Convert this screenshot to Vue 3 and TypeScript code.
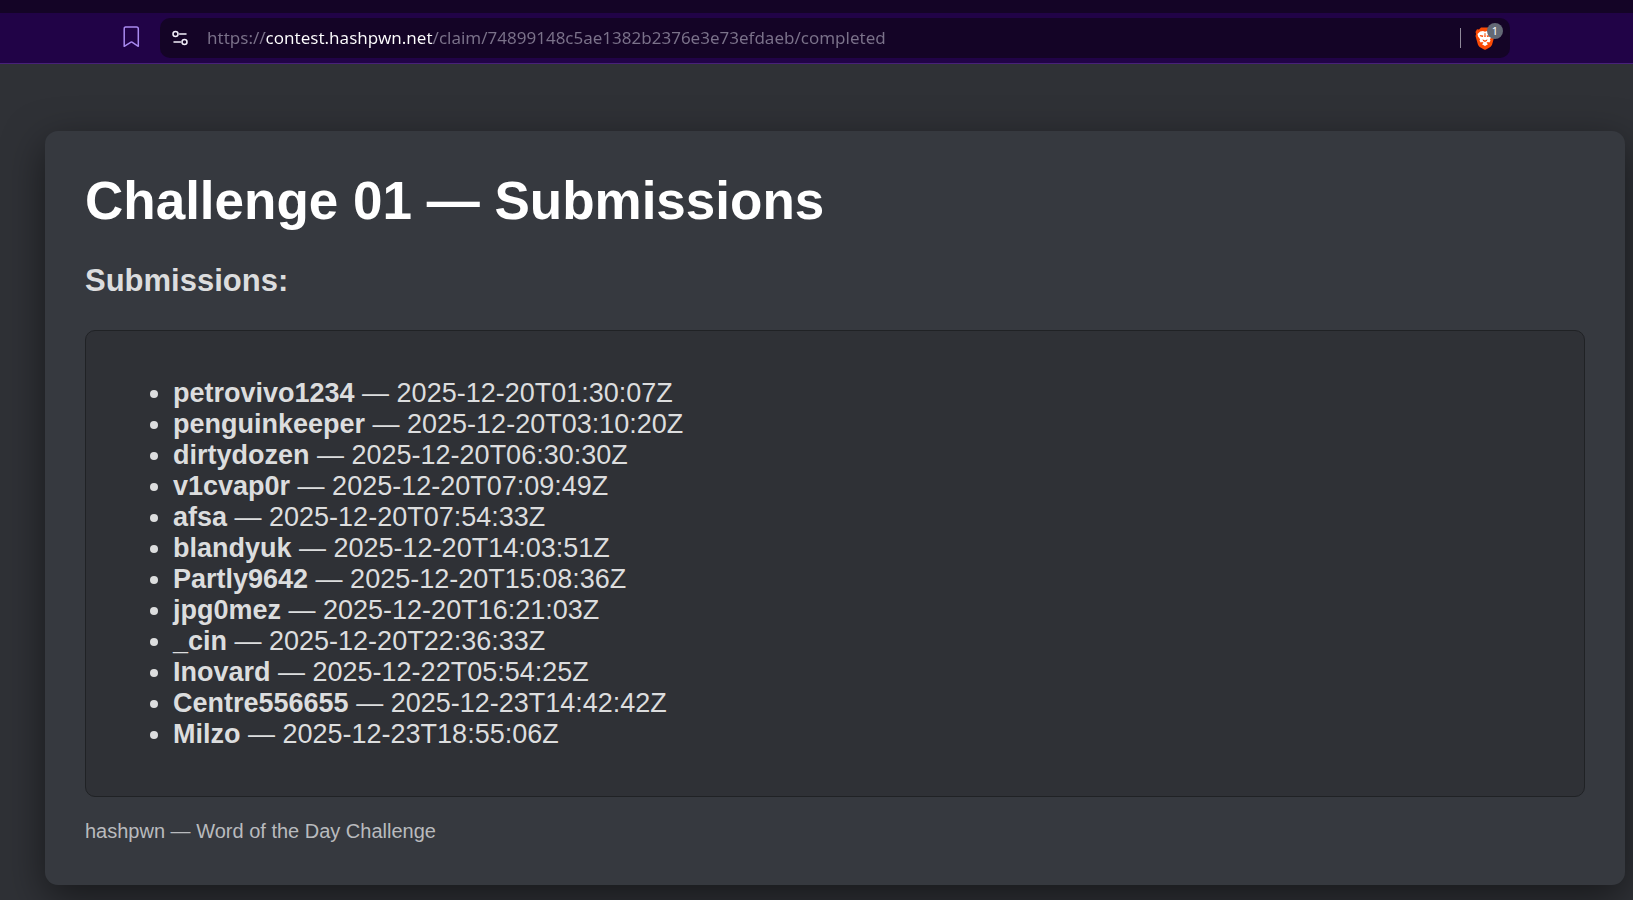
<script setup lang="ts">
import { ref } from 'vue'

interface Submission {
  user: string
  time: string
}

const address = ref('https://contest.hashpwn.net/claim/74899148c5ae1382b2376e3e73efdaeb/completed')

const submissions: Submission[] = [
  { user: 'petrovivo1234', time: '2025-12-20T01:30:07Z' },
  { user: 'penguinkeeper', time: '2025-12-20T03:10:20Z' },
  { user: 'dirtydozen', time: '2025-12-20T06:30:30Z' },
  { user: 'v1cvap0r', time: '2025-12-20T07:09:49Z' },
  { user: 'afsa', time: '2025-12-20T07:54:33Z' },
  { user: 'blandyuk', time: '2025-12-20T14:03:51Z' },
  { user: 'Partly9642', time: '2025-12-20T15:08:36Z' },
  { user: 'jpg0mez', time: '2025-12-20T16:21:03Z' },
  { user: '_cin', time: '2025-12-20T22:36:33Z' },
  { user: 'Inovard', time: '2025-12-22T05:54:25Z' },
  { user: 'Centre556655', time: '2025-12-23T14:42:42Z' },
  { user: 'Milzo', time: '2025-12-23T18:55:06Z' },
]
</script>

<template>
  <div class="window">
    <header class="chrome">
      <div class="toolbar">
        <button class="icon-button bookmark" type="button" aria-label="Bookmark this page">
          <svg width="18" height="22" viewBox="0 0 18 22" fill="none" stroke="#a98af0" stroke-width="1.5" stroke-linejoin="round">
            <path d="M3.500 1h11a1.800 1.800 0 0 1 1.800 1.800v17.500l-6.300-4.100a1 1 0 0 0-1 0l-6.800 4.100V2.800A1.600 1.600 0 0 1 3.500 1z" />
          </svg>
        </button>
        <div class="address-bar">
          <button class="icon-button" type="button" aria-label="View site information">
            <svg width="16" height="16" viewBox="0 0 16 16" fill="none" stroke="#f2effa" stroke-width="1.500" stroke-linecap="round">
              <circle cx="3.500" cy="4" r="2.500" />
              <path d="M7.500 4H14M2 12h6.500" />
              <circle cx="12.500" cy="12" r="2.500" />
            </svg>
          </button>
          <input v-model="address" class="address" type="text" aria-label="Address" spellcheck="false" />
          <span class="divider"></span>
          <button class="icon-button shield" type="button" aria-label="Brave Shields">
            <svg width="20" height="23" viewBox="0 0 20 23">
              <path fill="#fb4b05" d="M6 .5h8l2 2 2-.3L19.500 5l-.6 2 .6 2-2.400 8.500c-.4 1.300-1.200 2-2.200 2.700L11 22.400q-1 .6-2 0L5.100 20.200c-1-.7-1.800-1.400-2.200-2.700L.5 9l.6-2-.6-2L2 2.200l2 .3z" />
              <path fill="#fff" d="M10 4.700l2-.6 2.800.3 2.700 2.700-.6 2.400-2 2.700.6 1.600-1.200 1.800-1.500-.6-1.300.8 1.500 1.400L10 19l-3-1.800 1.500-1.400-1.300-.8-1.500.6-1.200-1.800.6-1.600-2-2.700-.6-2.400 2.700-2.700L8 4.100z" />
              <path fill="#fb4b05" d="M4.500 8l3.800.6-.4 1.300-2.400-.5zM15.500 8l-3.800.6.4 1.300 2.400-.5zM9.600 6h.8l.3 4h-1.400zM7.500 12.200l2.500 1.300 2.500-1.300-.6 1.700-1.900 1-1.900-1z" />
            </svg>
            <span class="badge">1</span>
          </button>
        </div>
      </div>
    </header>

    <main class="page">
      <section class="card">
        <h1>Challenge 01 — Submissions</h1>
        <h2>Submissions:</h2>
        <div class="panel">
          <ul>
            <li v-for="item in submissions" :key="item.user">
              <strong>{{ item.user }}</strong> — {{ item.time }}
            </li>
          </ul>
        </div>
        <footer>hashpwn — Word of the Day Challenge</footer>
      </section>
    </main>
  </div>
</template>

<style>
body {
  margin: 0;
  background: #2f3136;
}
</style>

<style scoped>
.window {
  display: flex;
  flex-direction: column;
  min-height: 100vh;
  box-sizing: border-box;
  overflow: hidden;
  background: #2f3136;
  color: #dcddde;
  font-family: "Liberation Sans", Arial, sans-serif;
}

.chrome {
  padding-top: 13px;
  background: #140426;
}

.toolbar {
  display: flex;
  align-items: center;
  gap: 20px;
  padding: 5px 123px 5px 122px;
  background: #210347;
  border-bottom: 1px solid #482079;
}

.icon-button {
  display: flex;
  flex: none;
  align-items: center;
  justify-content: center;
  padding: 0;
  border: 0;
  background: none;
}

.bookmark {
  width: 18px;
  height: 24px;
  padding-bottom: 2px;
}

.address-bar {
  display: flex;
  flex: 1;
  align-items: center;
  height: 40px;
  padding: 0 14px 0 12px;
  border-radius: 10px;
  background: #140426;
}

/* The host part of the address is brighter than the scheme and path. */
.address {
  flex: 1;
  min-width: 0;
  height: 30px;
  box-sizing: border-box;
  margin: 0 20px 0 19px;
  padding: 0 0 2px;
  border: 0;
  outline: 0;
  background: linear-gradient(90deg, #7b728a 58px, #ffffff 58px 226px, #7b728a 226px);
  background-clip: text;
  -webkit-background-clip: text;
  color: transparent;
  caret-color: #ffffff;
  font: 17px "Noto Sans", sans-serif;
}

.divider {
  width: 1px;
  height: 20px;
  margin-right: 14px;
  background: #8f8999;
}

.shield {
  position: relative;
  width: 20px;
  height: 24px;
  margin-right: 1px;
}

.badge {
  position: absolute;
  top: -3px;
  left: 12px;
  width: 16px;
  height: 16px;
  border-radius: 8px;
  background: #636975;
  color: #ffffff;
  font: 11px/16px "Noto Sans", sans-serif;
  text-align: center;
}

.page {
  flex: 1;
  padding: 67px 8px 15px 45px;
}

.card {
  padding: 40px;
  border-radius: 13px;
  background: #36393f;
  box-shadow: 0 13px 40px rgba(0, 0, 0, 0.5);
}

h1 {
  margin: 0;
  color: #ffffff;
  font-size: 53px;
  line-height: 60px;
}

h2 {
  margin: 32px 0 31px;
  font-size: 31px;
  line-height: 36px;
}

.panel {
  padding: 20px;
  border: 1px solid #202225;
  border-radius: 10px;
  background: #2f3136;
}

ul {
  margin: 27px 0 26px;
  padding-left: 67px;
  font-size: 27px;
  line-height: 31px;
}

footer {
  margin-top: 20px;
  color: #b9bbbe;
  font-size: 20px;
  line-height: 28px;
}
</style>
